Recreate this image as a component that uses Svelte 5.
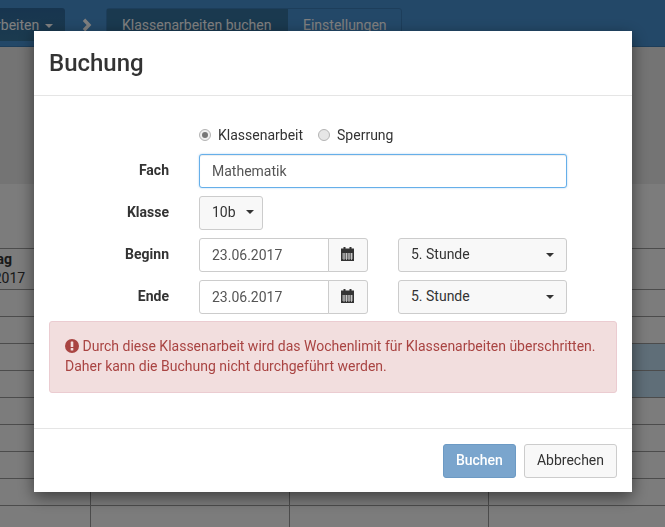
<script lang="ts">
	const rows = [41, 27, 27, 27, 27, 27, 27, 27, 27, 27];
	const blocked = [3, 4];
</script>

{#snippet calendar()}
	<svg class="cal" width="13" height="14" viewBox="0 0 13 14" aria-hidden="true">
		<rect x="2.5" y="0" width="2" height="3" fill="#333" />
		<rect x="8.5" y="0" width="2" height="3" fill="#333" />
		<rect x="0" y="1.5" width="13" height="3.5" fill="#333" />
		<rect x="0" y="5" width="13" height="9" fill="#333" />
		<path d="M1 7h11M1 9h11M1 11h11M3 6v7M5.5 6v7M8 6v7M10.5 6v7" stroke="#fff" stroke-width=".6" fill="none" />
	</svg>
{/snippet}

<div class="page">
	<nav class="topbar">
		<div class="menu">Klassenarbeiten <span class="caret"></span></div>
		<svg class="chevron" width="10" height="14" viewBox="0 0 10 14" aria-hidden="true">
			<path d="M2 1.8 7 7 2 12.2" fill="none" stroke="#fff" stroke-width="3.4" />
		</svg>
		<div class="tabs">
			<span class="tab active">Klassenarbeiten buchen</span>
			<span class="tab">Einstellungen</span>
		</div>
	</nav>

	<div class="band"></div>

	<div class="table">
		<div class="table-head"></div>
		{#each rows as height, i}
			<div class="table-row" style="height: {height}px">
				<div class="cell day">
					{#if i === 0}
						<strong>Freitag</strong>
						<span>23.06.2017</span>
					{/if}
				</div>
				<div class="cell"></div>
				<div class="cell"></div>
				<div class="cell" class:blocked={blocked.includes(i)}></div>
			</div>
		{/each}
	</div>
</div>

<div class="backdrop"></div>

<div class="modal">
	<header class="modal-header">
		<h4>Buchung</h4>
	</header>

	<div class="modal-body">
		<div class="form">
			<div class="radios">
				<span class="radio-item"><span class="radio checked"></span>Klassenarbeit</span>
				<span class="radio-item"><span class="radio"></span>Sperrung</span>
			</div>

			<span class="label">Fach</span>
			<div class="input focus">Mathematik</div>

			<span class="label">Klasse</span>
			<div><span class="btn klasse">10b <span class="caret dark"></span></span></div>

			<span class="label">Beginn</span>
			<div class="when">
				<div class="date">
					<span class="input">23.06.2017</span>
					<span class="addon">{@render calendar()}</span>
				</div>
				<span class="btn select">5. Stunde <span class="caret dark"></span></span>
			</div>

			<span class="label">Ende</span>
			<div class="when">
				<div class="date">
					<span class="input">23.06.2017</span>
					<span class="addon">{@render calendar()}</span>
				</div>
				<span class="btn select">5. Stunde <span class="caret dark"></span></span>
			</div>
		</div>

		<div class="alert">
			<svg class="warn" width="14" height="14" viewBox="0 0 14 14" aria-hidden="true">
				<circle cx="7" cy="7" r="7" fill="#a94442" />
				<rect x="5.7" y="2.4" width="2.6" height="5.6" rx=".5" fill="#f2dede" />
				<rect x="5.7" y="9" width="2.6" height="2.5" rx=".5" fill="#f2dede" />
			</svg>
			Durch diese Klassenarbeit wird das Wochenlimit für Klassenarbeiten überschritten.<br />
			Daher kann die Buchung nicht durchgeführt werden.
		</div>
	</div>

	<footer class="modal-footer">
		<span class="btn primary">Buchen</span>
		<span class="btn">Abbrechen</span>
	</footer>
</div>

<style>
	:global(body) {
		margin: 0;
		font-family: Roboto, "Liberation Sans", sans-serif;
		font-size: 14px;
		line-height: 20px;
		color: #333;
		overflow: hidden;
	}

	.page {
		height: 527px;
		overflow: hidden;
		background: #f8f8f8;
	}

	.topbar {
		display: flex;
		align-items: flex-start;
		padding-top: 8px;
		box-sizing: border-box;
		height: 47px;
		background: #4791d1;
		border-bottom: 1px solid #3a7cb6;
		color: #fff;
		white-space: nowrap;
	}

	.menu {
		flex-shrink: 0;
		margin-left: -76px;
		width: 141px;
		box-sizing: border-box;
		height: 33px;
		padding: 7px 15px;
		background: linear-gradient(#2f6a9e, #37769f);
		border-radius: 0 3px 3px 0;
	}

	.caret {
		display: inline-block;
		width: 0;
		height: 0;
		margin-left: 2px;
		vertical-align: middle;
		border-top: 4px solid #fff;
		border-left: 4px solid transparent;
		border-right: 4px solid transparent;
	}

	.caret.dark {
		border-top-color: #333;
	}

	.chevron {
		flex-shrink: 0;
		margin: 10px 0 0 17px;
	}

	.tabs {
		display: flex;
		margin-left: 14px;
		height: 33px;
		border: 1px solid #3a7cb6;
		border-radius: 3px;
		box-sizing: border-box;
	}

	.tab {
		box-sizing: border-box;
		padding: 6px 15px;
		width: 113px;
	}

	.tab.active {
		background: #34739f;
		width: 181px;
	}

	.band {
		height: 137px;
		background: #e8e8e8;
	}

	.table {
		margin-left: -108px;
		width: 800px;
		background: #f8f8f8;
	}

	.table-head,
	.table-row {
		box-sizing: border-box;
		border-bottom: 1px solid #999;
	}

	.table-head {
		height: 65px;
	}

	.table-row {
		display: grid;
		grid-template-columns: repeat(4, 199px);
	}

	.cell {
		box-sizing: border-box;
		border-right: 1px solid #999;
	}

	.day {
		display: flex;
		flex-direction: column;
		align-items: center;
		padding: 1px 2px 0 0;
		line-height: 19px;
		white-space: nowrap;
	}

	.blocked {
		background: #bedcf0;
	}

	.backdrop {
		position: fixed;
		inset: 0;
		background: rgba(0, 0, 0, 0.5);
	}

	.modal {
		position: fixed;
		left: 34px;
		top: 31px;
		width: 598px;
		background: #fff;
		box-shadow: 0 5px 15px rgba(0, 0, 0, 0.5);
	}

	.modal-header {
		height: 65px;
		box-sizing: border-box;
		padding: 15px;
		border-bottom: 1px solid #e5e5e5;
	}

	h4 {
		margin: 0;
		font-size: 24px;
		font-weight: 500;
		line-height: 34px;
	}

	.modal-body {
		padding: 28px 15px 35px;
	}

	.form {
		display: grid;
		grid-template-columns: 120px 368px;
		column-gap: 30px;
		row-gap: 8px;
		align-items: center;
	}

	.radios {
		grid-column: 2;
		display: flex;
		gap: 15px;
		height: 22px;
		align-items: center;
		line-height: 22px;
	}

	.radio-item {
		display: flex;
		align-items: center;
		gap: 7px;
	}

	.radio {
		box-sizing: border-box;
		width: 12px;
		height: 12px;
		border-radius: 50%;
		border: 1px solid #b4b4b4;
		background: #e6e6e6;
		position: relative;
	}

	.radio.checked {
		background: #f0f0f0;
	}

	.radio.checked::after {
		content: "";
		position: absolute;
		inset: 2px;
		border-radius: 50%;
		background: #777;
	}

	.label {
		text-align: right;
		font-weight: 700;
		padding-bottom: 2px;
	}

	.input {
		display: block;
		box-sizing: border-box;
		height: 34px;
		padding: 6px 12px;
		border: 1px solid #ccc;
		border-radius: 3px;
		background: #fff;
		color: #555;
	}

	.input.focus {
		border-color: #66afe9;
		box-shadow: inset 0 1px 1px rgba(0, 0, 0, 0.075), 0 0 2px rgba(102, 175, 233, 0.6);
	}

	.btn {
		display: inline-flex;
		align-items: center;
		gap: 8px;
		box-sizing: border-box;
		height: 34px;
		padding: 5px 12px 7px;
		border: 1px solid #ccc;
		border-radius: 3px;
		background: #f8f8f8;
		color: #333;
	}

	.klasse {
		width: 64px;
	}

	.when {
		display: flex;
		gap: 30px;
	}

	.date {
		display: flex;
		width: 169px;
	}

	.date .input {
		flex: 1;
		border-radius: 3px 0 0 3px;
	}

	.addon {
		display: flex;
		align-items: center;
		justify-content: center;
		width: 40px;
		box-sizing: border-box;
		margin-left: -1px;
		padding-right: 2px;
		border: 1px solid #ccc;
		border-radius: 0 3px 3px 0;
		background: #f8f8f8;
	}

	.cal {
		margin-top: -3px;
	}

	.select {
		width: 169px;
		justify-content: space-between;
	}

	.select .caret {
		margin-top: 2px;
	}

	.alert {
		margin-top: 7px;
		box-sizing: border-box;
		height: 72px;
		padding: 14px 15px;
		border: 1px solid #ebccd1;
		border-radius: 3px;
		background: #f2dede;
		color: #a94442;
		line-height: 20px;
	}

	.warn {
		vertical-align: -2px;
	}

	.modal-footer {
		display: flex;
		justify-content: flex-end;
		gap: 8px;
		height: 64px;
		box-sizing: border-box;
		padding: 15px;
		border-top: 1px solid #e5e5e5;
	}

	.primary {
		background: #7aa5cd;
		border-color: #6c9ac4;
		color: #fff;
		font-weight: 500;
	}
</style>
